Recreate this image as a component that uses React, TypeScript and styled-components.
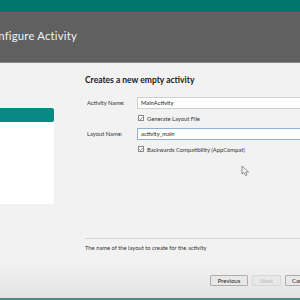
import React from 'react'
import styled, { createGlobalStyle } from 'styled-components'

const GlobalStyle = createGlobalStyle`
    html, body {
        margin: 0;
        padding: 0;
        width: 300px;
        height: 300px;
        overflow: hidden;
        background: #f2f2f2;
    }
    * {
        box-sizing: border-box;
    }
`

const Window = styled.div`
    position: relative;
    width: 300px;
    height: 300px;
    display: flex;
    flex-direction: column;
    overflow: hidden;
    background: #f2f2f2;
    font-family: Lato, 'Open Sans', sans-serif;
    color: #222;
`
const TitleStrip = styled.div`
    height: 12px;
    background: #00766f;
`
const Header = styled.div`
    height: 51px;
    background: #606060;
    border-bottom: 1px solid #8a8a8a;
    display: flex;
    align-items: center;
    padding-bottom: 3px;
`
const Title = styled.h1`
    margin: 0 0 0 -16px;
    font-size: 11.3px;
    font-weight: 400;
    letter-spacing: 0.2px;
    color: #f4f4f4;
    white-space: nowrap;
`
const Body = styled.div`
    flex: 1;
    display: flex;
    min-height: 0;
`
const Sidebar = styled.div`
    width: 54px;
    padding-top: 45px;
`
const SidebarPanel = styled.div`
    height: 96px;
    background: #ffffff;
`
const SelectedRow = styled.div`
    height: 14px;
    background: #0a8884;
    border-radius: 0 2px 2px 0;
`
const Main = styled.div`
    flex: 1;
    display: flex;
    flex-direction: column;
    padding: 11px 0 0 31px;
    min-width: 0;
`
const Heading = styled.h2`
    margin: 0;
    font-size: 8.5px;
    line-height: 12px;
    font-weight: 700;
    color: #1a1a1a;
    white-space: nowrap;
`
const Form = styled.div`
    display: grid;
    grid-template-columns: 50px 1fr;
    grid-auto-rows: 15.5px;
    align-items: center;
    margin-top: 9px;
    margin-left: 2px;
`
const Label = styled.span`
    font-size: 5.8px;
    color: #333;
    white-space: nowrap;
`
const Input = styled.div<{ $focused?: boolean }>`
    height: 12px;
    margin-right: -4px;
    background: #ffffff;
    border: 1px solid ${(p) => (p.$focused ? '#8fb0d8' : '#cfcfcf')};
    border-right: none;
    font-size: 5.8px;
    line-height: 10px;
    padding-left: 3px;
    color: #222;
`
const CheckRow = styled.label`
    grid-column: 2;
    display: flex;
    align-items: center;
    gap: 3px;
    padding-left: 1px;
    font-size: 5.8px;
    color: #333;
    white-space: nowrap;
`
const Box = styled.span`
    width: 6px;
    height: 6px;
    border: 1px solid #8a8a8a;
    background: #fff;
    display: flex;
    align-items: center;
    justify-content: center;
`
const Spacer = styled.div`
    flex: 1;
`
const Separator = styled.div`
    height: 1px;
    background: #d6d6d6;
`
const Description = styled.p`
    margin: 5px 0 11px;
    font-size: 5.8px;
    color: #333;
    white-space: nowrap;
`
const Footer = styled.div`
    height: 36px;
    display: flex;
    align-items: center;
    gap: 4px;
    padding: 0 0 0 210px;
    background: linear-gradient(#f2f2f2, #e4e4e4);
    white-space: nowrap;
`
const Button = styled.button<{ $width: number }>`
    width: ${(p) => p.$width}px;
    flex: none;
    height: 11px;
    padding: 0;
    background: #e8e8e8;
    border: 1px solid ${(p) => (p.disabled ? '#d8d8d8' : '#adadad')};
    border-radius: 1px;
    font-family: inherit;
    font-size: 6px;
    line-height: 9px;
    color: ${(p) => (p.disabled ? '#b8b8b8' : '#222')};
    text-align: center;
`
const CutButton = styled(Button)`
    text-align: left;
    padding-left: 6px;
`
const BottomStrip = styled.div`
    height: 2px;
    background: #4e8a84;
`
const Cursor = styled.svg`
    position: absolute;
    left: 241px;
    top: 165px;
`

const Check = () => (
    <Box>
        <svg width="5" height="5" viewBox="0 0 5 5">
            <path d="M0.6 2.6 L2 4 L4.5 0.8" fill="none" stroke="#444" strokeWidth="0.8" />
        </svg>
    </Box>
)

const App = () => (
    <Window>
        <GlobalStyle />
        <TitleStrip />
        <Header>
            <Title>Configure Activity</Title>
        </Header>
        <Body>
            <Sidebar>
                <SidebarPanel>
                    <SelectedRow />
                </SidebarPanel>
            </Sidebar>
            <Main>
                <Heading>Creates a new empty activity</Heading>
                <Form>
                    <Label>Activity Name:</Label>
                    <Input>MainActivity</Input>
                    <CheckRow>
                        <Check />
                        Generate Layout File
                    </CheckRow>
                    <Label>Layout Name:</Label>
                    <Input $focused>activity_main</Input>
                    <CheckRow>
                        <Check />
                        Backwards Compatibility (AppCompat)
                    </CheckRow>
                </Form>
                <Spacer />
                <Separator />
                <Description>The name of the layout to create for the activity</Description>
            </Main>
        </Body>
        <Footer>
            <Button $width={38}>Previous</Button>
            <Button $width={29} disabled>
                Next
            </Button>
            <CutButton $width={36}>Cancel</CutButton>
        </Footer>
        <BottomStrip />
        <Cursor width="9" height="12" viewBox="0 0 9 12">
            <path d="M1 1 L1 9 L3 7.5 L4.5 10.5 L6 10 L4.7 7 L7.5 7 Z" fill="#f6f6f6" stroke="#777" strokeWidth="0.8" />
        </Cursor>
    </Window>
)

export default App
